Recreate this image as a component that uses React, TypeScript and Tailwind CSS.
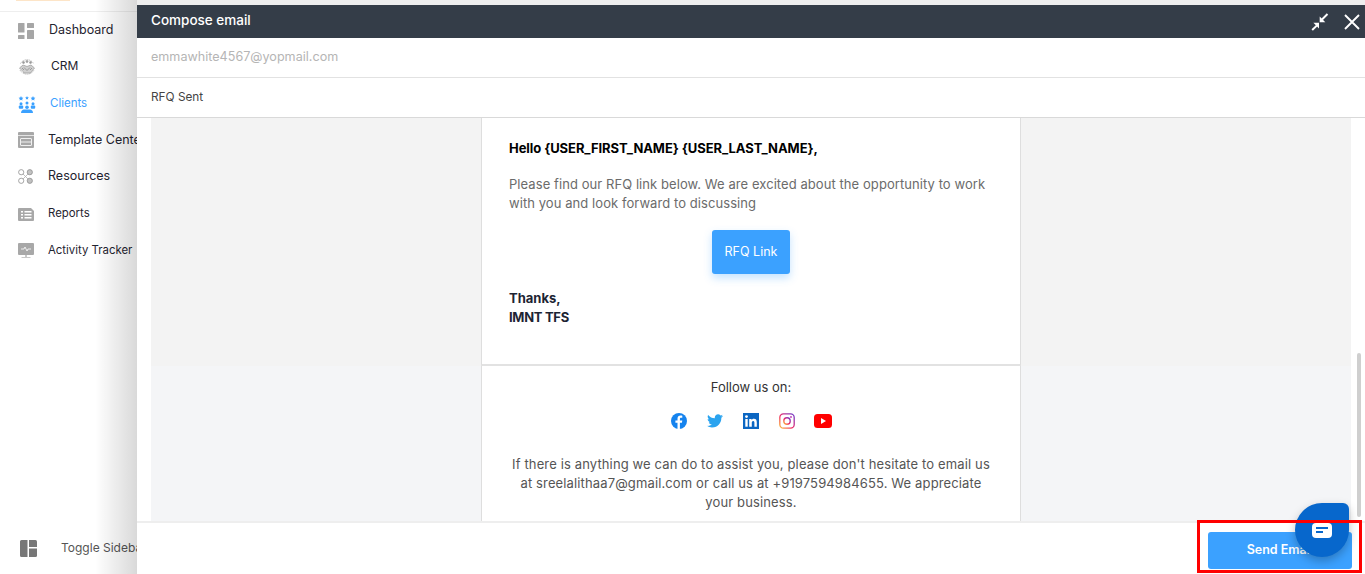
import React from "react";

function Star({ x, y, r }: { x: number; y: number; r: number }) {
  const pts: string[] = [];
  for (let i = 0; i < 10; i++) {
    const a = (Math.PI / 5) * i - Math.PI / 2;
    const q = i % 2 === 0 ? r : r * 0.5;
    pts.push(`${(x + q * Math.cos(a)).toFixed(2)},${(y + q * Math.sin(a)).toFixed(2)}`);
  }
  return <polygon points={pts.join(" ")} />;
}

function NavIcon({ name }: { name: string }) {
  const g = "#a6a6a6";
  const b = "#3ba1ff";
  if (name === "dash")
    return (
      <svg width="16" height="16" viewBox="0 0 16 16" fill={g}>
        <rect x="0" y="0" width="6.5" height="9.5" rx="0.6" />
        <rect x="9" y="0" width="7" height="5" rx="0.6" />
        <rect x="0" y="12" width="6.5" height="4" rx="0.6" />
        <rect x="9" y="7" width="7" height="9" rx="0.6" />
      </svg>
    );
  if (name === "crm")
    return (
      <svg width="18" height="20" viewBox="0 0 18 20" fill="none" stroke="#a0a0a0" strokeWidth="0.8">
        <path d="M2.5 7.5A7.5 7.5 0 0 1 15.5 7.5" strokeDasharray="1.2 0.8" />
        <path d="M2 14A8 8 0 0 0 16 14" strokeDasharray="1.2 0.8" />
        <circle cx="5.5" cy="6.5" r="1" fill="#999" />
        <circle cx="9" cy="5.5" r="1" fill="#999" />
        <circle cx="12.5" cy="6.5" r="1" fill="#999" />
        <path d="M1.5 12l3.5-3 4 1.5 4-1.5 3.5 3-3 3.5-1 1.5H6l-1-1.5z" fill="#d0d0d0" />
        <path d="M6 11.5l3 3 3-3M4 12l2 2M14 12l-2 2" stroke="#8a8a8a" />
      </svg>
    );
  if (name === "clients")
    return (
      <svg width="18" height="17" viewBox="0 0 18 17" fill={b}>
        <Star x={3} y={2.6} r={2.5} />
        <Star x={9} y={2} r={2} />
        <Star x={15} y={2.6} r={2.5} />
        <circle cx="3" cy="7.8" r="1.5" />
        <circle cx="9" cy="7" r="1.5" />
        <circle cx="15" cy="7.8" r="1.5" />
        <rect x="0.8" y="9.6" width="4.4" height="3.2" rx="1" />
        <rect x="12.8" y="9.6" width="4.4" height="3.2" rx="1" />
        <circle cx="9" cy="11.2" r="1.8" />
        <path d="M3 17c0-2.2 1.4-3.4 3-3.4h6c1.6 0 3 1.2 3 3.4z" />
      </svg>
    );
  if (name === "template")
    return (
      <svg width="16" height="16" viewBox="0 0 16 16">
        <rect width="16" height="16" rx="1" fill="#a8a8a8" />
        <rect x="0" y="3" width="16" height="1" fill="#e4e4e4" />
        <rect x="2.5" y="6.5" width="11" height="7" rx="0.5" fill="none" stroke="#f0f0f0" />
        <rect x="3" y="9.5" width="10" height="1" fill="#f0f0f0" />
      </svg>
    );
  if (name === "resources")
    return (
      <svg width="15" height="15" viewBox="0 0 15 15" fill="none" stroke="#8f8f8f" strokeWidth="0.8">
        <path d="M5 5l5 5M10 5l-5 5" stroke="#b0b0b0" />
        <circle cx="3.2" cy="3.2" r="2.6" />
        <circle cx="11.8" cy="3.2" r="2.6" fill="#c2c2c2" />
        <circle cx="3.2" cy="11.8" r="2.6" />
        <circle cx="11.8" cy="11.8" r="2.6" fill="#c2c2c2" />
      </svg>
    );
  if (name === "reports")
    return (
      <svg width="16" height="13" viewBox="0 0 16 13">
        <path d="M1 0H13L16 3V12a1 1 0 0 1-1 1H1a1 1 0 0 1-1-1V1a1 1 0 0 1 1-1Z" fill="#a8a8a8" />
        <rect x="3" y="3" width="2" height="1.5" fill="#fff" />
        <rect x="6.5" y="3" width="7" height="1.5" fill="#fff" />
        <rect x="3" y="6" width="2" height="1.5" fill="#fff" />
        <rect x="6.5" y="6" width="7" height="1.5" fill="#fff" />
        <rect x="3" y="9" width="2" height="1.5" fill="#fff" />
        <rect x="6.5" y="9" width="7" height="1.5" fill="#fff" />
      </svg>
    );
  if (name === "activity")
    return (
      <svg width="16" height="16" viewBox="0 0 16 16">
        <rect width="16" height="12" rx="1" fill="#a8a8a8" />
        <path d="M3 6h3l1-2 2 4 1-2h3" fill="none" stroke="#fff" strokeWidth="0.8" />
        <rect x="7" y="12" width="2" height="2" fill="#c8c8c8" />
        <rect x="3.5" y="14" width="9" height="1" fill="#c8c8c8" />
      </svg>
    );
  return (
    <svg width="17" height="17" viewBox="0 0 17 17" fill="#777">
      <path d="M1.5 0H7.5V17H1.5A1.5 1.5 0 0 1 0 15.5V1.5A1.5 1.5 0 0 1 1.5 0Z" />
      <path d="M9 0H15.5A1.5 1.5 0 0 1 17 1.5V7H9Z" />
      <path d="M9 8.5H17V15.5A1.5 1.5 0 0 1 15.5 17H9Z" />
    </svg>
  );
}

const items = [
  { icon: "dash", label: "Dashboard", h: "h-[37px]", iw: "w-[31px]", text: "text-[12.5px] text-[#1f2430]" },
  { icon: "crm", label: "CRM", h: "h-[34px]", iw: "w-[33px]", text: "text-[12px] text-[#1f2430]" },
  { icon: "clients", label: "Clients", h: "h-[40px] pt-0.5", iw: "w-[32px]", text: "text-[11.5px] text-[#3ba1ff]" },
  { icon: "template", label: "Template Center", h: "h-[34px]", iw: "w-[30px]", text: "text-[12.5px] text-[#1f2430]" },
  { icon: "resources", label: "Resources", h: "h-[38px]", iw: "w-[30px]", text: "text-[12.5px] text-[#1f2430]" },
  { icon: "reports", label: "Reports", h: "h-[36px] pt-0.5", iw: "w-[30px]", text: "text-[11.4px] text-[#1f2430]" },
  { icon: "activity", label: "Activity Tracker", h: "h-[40px]", iw: "w-[30px]", text: "text-[11.4px] text-[#1f2430]" },
];

function Socials() {
  return (
    <div className="mt-4 flex h-4 items-center justify-center gap-5 pl-px">
      <svg width="16" height="16" viewBox="0 0 16 16">
        <circle cx="8" cy="8" r="8" fill="#1583ee" />
        <path d="M8.9 16V9.8h2l.4-2.4H8.9V6c0-.7.3-1.2 1.3-1.2h1.1V2.7c-.5-.1-1.1-.1-1.7-.1-1.9 0-3.1 1.1-3.1 3.2v1.6H4.4v2.4h2.1V16z" fill="#fff" />
      </svg>
      <svg width="16" height="14" viewBox="0 0 24 20">
        <path fill="#2aa3ef" d="M24 2.4c-.9.4-1.8.7-2.8.8 1-.6 1.8-1.6 2.2-2.7-1 .6-2 1-3.1 1.2C19.3.7 18 0 16.6 0c-2.7 0-4.9 2.2-4.9 4.9 0 .4 0 .8.1 1.1C7.7 5.8 4.1 3.9 1.7.9c-.4.7-.7 1.6-.7 2.5 0 1.7.9 3.2 2.2 4.1-.8 0-1.6-.2-2.2-.6v.1c0 2.4 1.7 4.4 3.9 4.8-.4.1-.8.2-1.3.2-.3 0-.6 0-.9-.1.6 2 2.4 3.4 4.6 3.4-1.7 1.3-3.8 2.1-6.1 2.1-.4 0-.8 0-1.2-.1C2.2 18.9 4.8 19.7 7.5 19.7c9.1 0 14-7.5 14-14v-.6c1-.7 1.8-1.6 2.5-2.7z" />
      </svg>
      <svg width="16" height="16" viewBox="0 0 16 16">
        <rect width="16" height="16" fill="#0b66c2" />
        <rect x="2.3" y="6" width="2.4" height="7.7" fill="#fff" />
        <circle cx="3.5" cy="3.6" r="1.4" fill="#fff" />
        <path d="M6.2 6h2.3v1.1c.4-.7 1.2-1.3 2.4-1.3 2.4 0 2.9 1.6 2.9 3.6v4.3h-2.4V9.9c0-.9 0-2-1.2-2s-1.4 1-1.4 2v3.8H6.2z" fill="#fff" />
      </svg>
      <svg width="16" height="16" viewBox="0 0 16 16">
        <defs>
          <linearGradient id="ig" x1="0" y1="1" x2="1" y2="0">
            <stop offset="0" stopColor="#fdc13a" />
            <stop offset="0.45" stopColor="#ee2a6b" />
            <stop offset="1" stopColor="#6a3fd0" />
          </linearGradient>
        </defs>
        <rect x="0.8" y="0.8" width="14.4" height="14.4" rx="3.6" fill="none" stroke="url(#ig)" strokeWidth="1.3" />
        <circle cx="8" cy="8" r="3.2" fill="none" stroke="url(#ig)" strokeWidth="1.4" />
        <circle cx="12" cy="4" r="0.9" fill="#c13bb0" />
      </svg>
      <svg className="-ml-px" width="18" height="14" viewBox="0 0 18 14">
        <rect width="18" height="14" rx="3.5" fill="#f00" />
        <path d="M7 4l5 3-5 3z" fill="#fff" />
      </svg>
    </div>
  );
}

export default function App() {
  return (
    <div className="relative h-[574px] w-[1365px] overflow-hidden bg-white font-['Inter','Liberation_Sans',sans-serif]">
      {/* Sidebar behind the panel */}
      <aside className="flex h-full w-[137px] flex-col overflow-hidden whitespace-nowrap">
        <div className="h-[12px] flex-none border-b border-[#eeeeee]">
          <div className="ml-4 h-px w-[54px] bg-[#fde5c8]" />
        </div>
        <nav className="flex flex-col">
          {items.map((it) => (
            <div key={it.label} className={`flex flex-none items-center pl-[18px] ${it.h}`}>
              <div className={`flex flex-none ${it.iw}`}>
                <NavIcon name={it.icon} />
              </div>
              <span className={it.text}>{it.label}</span>
            </div>
          ))}
        </nav>
        <div className="mb-[17px] mt-auto flex items-center pl-5 text-[12px] text-[#555]">
          <span className="flex w-[41px] flex-none">
            <NavIcon name="toggle" />
          </span>
          Toggle Sidebar
        </div>
      </aside>

      {/* Backdrop tint on the top strip */}
      <div className="absolute left-[137px] right-0 top-0 h-[5px] bg-[#eeeeee]" />
      <div className="absolute left-[95px] top-0 h-full w-[42px] bg-gradient-to-r from-transparent to-black/15" />

      {/* Compose panel */}
      <section className="absolute bottom-0 left-[137px] right-0 top-[5px] flex flex-col bg-white">
        <header className="flex h-[33px] flex-none items-center justify-between bg-[#343d48] pl-[14px] pr-[5px] text-[13.5px] font-medium text-white">
          <span className="mb-0.5">Compose email</span>
          <div className="flex items-center gap-[15px]">
            <svg width="18" height="18" viewBox="0 0 18 18" fill="#fff">
              <path d="M16.5 1L11 6.5" stroke="#fff" strokeWidth="2" />
              <path d="M8.7 9.2V3.6L14.3 9.2z" />
              <path d="M1.2 17L6 12.4" stroke="#fff" strokeWidth="2" />
              <path d="M8 9.8v5.6L2.4 9.8z" />
            </svg>
            <svg width="16" height="16" viewBox="0 0 16 16" stroke="#fff" strokeWidth="1.9" fill="none">
              <path d="M1 1l14 14M15 1L1 15" />
            </svg>
          </div>
        </header>
        <div className="flex h-10 flex-none items-center border-b border-[#e2e2e2] pb-px pl-[14px] text-[12.6px] text-[#b5b5b5]">
          emmawhite4567@yopmail.com
        </div>
        <div className="flex h-10 flex-none items-center border-b border-[#d9d9d9] pl-[14px] text-[11.8px] text-[#444]">
          RFQ Sent
        </div>

        <div className="relative min-h-0 flex-1 overflow-hidden pl-[14px] pr-[14px]">
          <div className="flex h-[248px] justify-center bg-[#f3f3f3]">
            <div className="w-[540px] border-x border-b-2 border-x-[#dedede] border-b-[#e2e2e2] bg-white px-[27px] pt-[21px] text-[13px]">
              <p className="font-bold leading-[19px] tracking-[-0.07px] text-black">
                Hello {"{USER_FIRST_NAME}"} {"{USER_LAST_NAME}"},
              </p>
              <p className="mt-[17px] leading-[19px] tracking-[0.07px] text-[#6b6b6b]">
                Please find our RFQ link below. We are excited about the opportunity to work with you and look forward to discussing
              </p>
              <div className="mt-[17px] flex justify-center">
                <span className="flex h-11 w-[78px] items-center justify-center rounded-[3px] bg-[#3ba1ff] text-[12.5px] text-white shadow-[0_4px_8px_rgba(59,161,255,0.3)]">
                  RFQ Link
                </span>
              </div>
              <p className="mt-[15px] font-bold leading-[19px] text-[#1d2433]">
                Thanks,
                <br />
                <span className="tracking-[-0.3px]">IMNT TFS</span>
              </p>
            </div>
          </div>
          <div className="flex h-[156px] justify-center bg-[#f4f5f7]">
            <div className="w-[540px] border-x border-[#dedede] bg-white px-[30px] pt-3 text-center text-[13px] leading-[19px] text-[#555]">
              <p className="text-[#333]">Follow us on:</p>
              <Socials />
              <p className="mt-[26px] tracking-[0.13px]">
                If there is anything we can do to assist you, please don't hesitate to email us at sreelalithaa7@gmail.com or call us at +9197594984655. We appreciate your business.
              </p>
            </div>
          </div>
          {/* scrollbar thumb */}
          <div className="absolute right-[4px] top-[235px] h-[164px] w-[4px] rounded-sm bg-[#cfcfcf]" />
        </div>

        <footer className="flex h-[53px] flex-none items-center justify-end border-t-2 border-[#eeeeee] pr-[13px]">
          <button className="mt-[3px] h-[37px] w-[144px] rounded-[3px] bg-[#3ba1ff] text-[12.5px] font-semibold text-white">
            Send Email
          </button>
        </footer>
      </section>

      {/* Chat bubble */}
      <div className="absolute left-[1295px] top-[503px] flex h-[54px] w-[54px] items-center justify-center rounded-[27px] rounded-tr-[6px] bg-[#0767cc] shadow-[0_4px_10px_rgba(0,0,0,0.25)]">
        <svg width="20" height="15" viewBox="0 0 20 15">
          <rect width="20" height="15" rx="4" fill="#fff" />
          <rect x="4" y="4" width="12" height="2" fill="#0767cc" />
          <rect x="4" y="8" width="7" height="2" fill="#0767cc" />
        </svg>
      </div>

      {/* Red highlight */}
      <div className="absolute left-[1197px] top-[520px] h-[53px] w-[165px] border-[3px] border-[#f00]" />
    </div>
  );
}
